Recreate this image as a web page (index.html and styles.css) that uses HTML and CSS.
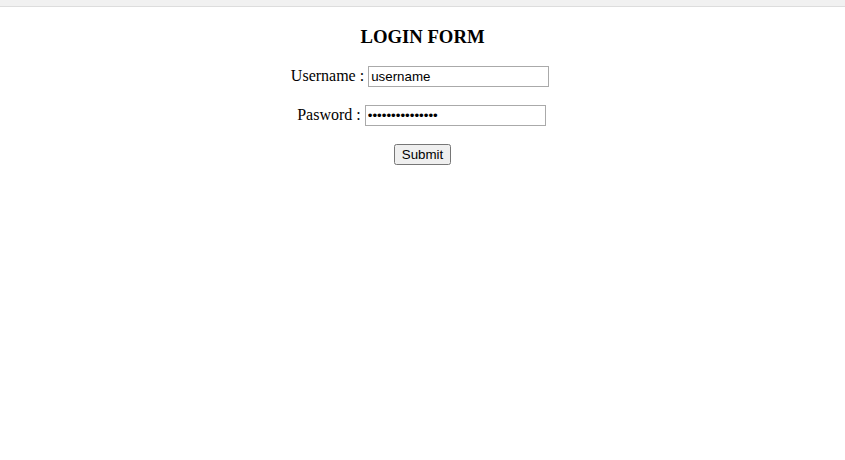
FILE: index.html
```html
<!doctype html>
<html lang="en">
<head>
  <meta charset="utf-8">
  <title>Login form</title>
  <meta name="viewport" content="width=device-width, initial-scale=1">
  <link rel="stylesheet" href="styles.css">
</head>

<body>

  <div class="top-bar"></div>
  <form id="login-form" class="login">
    <h3>LOGIN FORM</h3>
    <p>Username : <input type="text" id="username" class="user-field" name="username" value="username"></p>
    <p>Pasword : <input type="password" id="password" class="pass-field" name="password" value="passwordpasswo1"></p>
    <p><input type="submit" id="submit-login" value="Submit"></p>
  </form>

</body>
</html>
```

FILE: styles.css
```css
body {
  margin:0;
  font-family:'Liberation Serif', 'Times New Roman', serif;
  font-size:16px;
}
.top-bar {
  height:6px;
  background:#f1f1f1;
  border-bottom:1px solid #ddd;
}
.login {
  margin:0 8px;
  text-align:center;
}
.login h3 {
  margin:19px 0 15px;
  font-size:18.72px;
}
.login p {
  margin:16px 0;
  height:23px;
  line-height:23px;
}
.login input[type=text],
.login input[type=password] {
  font-family:'Liberation Sans', Arial, sans-serif;
  font-size:13.33px;
  width:181px;
  height:21px;
  box-sizing:border-box;
  border:1px solid #aaa;
  padding:2px;
  margin-top:2px;
  vertical-align:top;
}
.login .user-field {
  margin-right:5px;
}
.login .pass-field {
  margin-right:2px;
}
.login input[type=submit] {
  font-family:'Liberation Sans', Arial, sans-serif;
  font-size:13.33px;
  height:21px;
}
```
